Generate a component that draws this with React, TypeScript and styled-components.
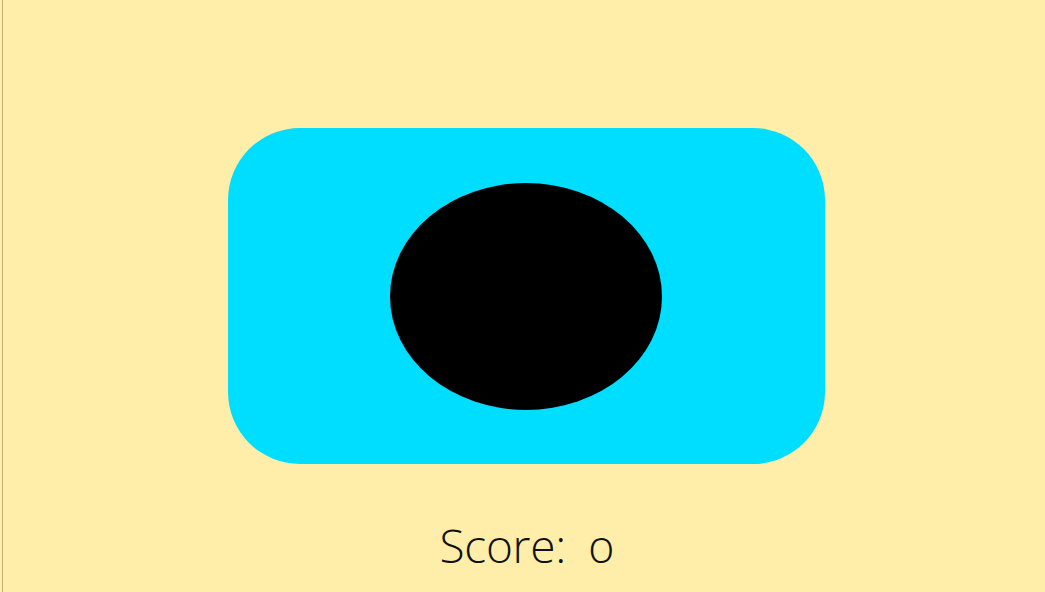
import React from "react";
import styled, { createGlobalStyle } from "styled-components";

const Global = createGlobalStyle`
  html, body { margin: 0; padding: 0; background: #FFEDAA; }
  #root { min-height: 592px; }
`;

const Page = styled.div`
  box-sizing: border-box;
  width: 1045px;
  height: 592px;
  overflow: hidden;
  background: #FFEDAA;
  border-left: 1px solid #FFEDAA;
  position: relative;
  display: flex;
  flex-direction: column;
  align-items: center;
  padding: 128px 0 0 7px;
  &::before {
    content: "";
    position: absolute;
    left: 1px;
    top: 0;
    bottom: 0;
    width: 1px;
    background: #C4AE78;
  }
`;

const Board = styled.div`
  width: 597px;
  height: 336px;
  border-radius: 72px;
  background: #00DEFF;
  display: flex;
  align-items: center;
  justify-content: center;
`;

const Hole = styled.div`
  width: 272px;
  height: 227px;
  border-radius: 50%;
  background: #000;
  margin-left: -1px;
`;

const Score = styled.div`
  margin-top: 53px;
  font-family: "Open Sans", "Lato", sans-serif;
  font-weight: 300;
  font-size: 46px;
  line-height: 56px;
  letter-spacing: -0.3px;
  color: #111;
  font-variant-numeric: oldstyle-nums;
  white-space: pre;
`;

export default function App() {
  return (
    <>
      <Global />
      <Page>
        <Board>
          <Hole />
        </Board>
        <Score>{"Score:  0"}</Score>
      </Page>
    </>
  );
}
